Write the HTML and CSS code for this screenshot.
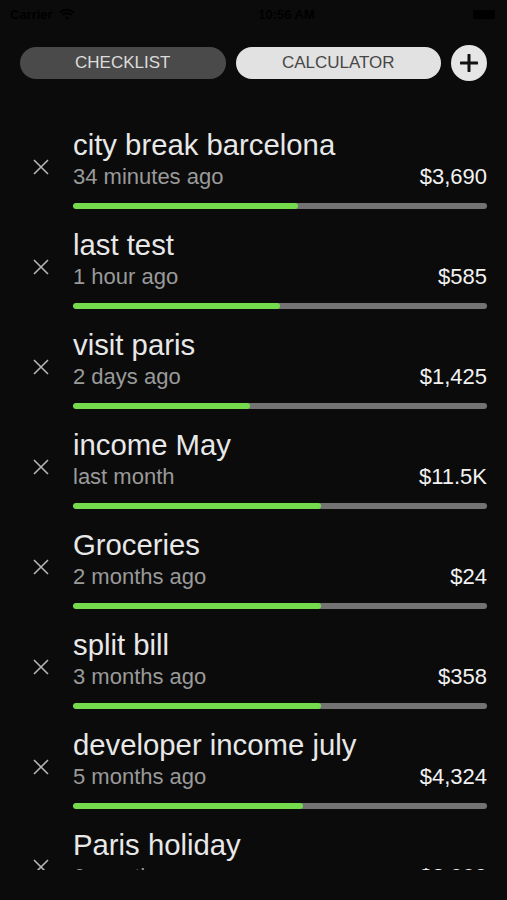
FILE: index.html
```html
<!DOCTYPE html>
<html>
  <head>
    <title>Budget Lists</title>
    <link rel="stylesheet" href="styles.css">
  </head>
  <body>
    <div class="status-bar">
      <span class="carrier">Carrier
        <svg class="wifi" width="16" height="12" viewBox="0 0 16 12">
          <path d="M1 4.5 A10 10 0 0 1 15 4.5" fill="none" stroke="#000" stroke-width="2"/>
          <path d="M3.5 7 A6.5 6.5 0 0 1 12.5 7" fill="none" stroke="#000" stroke-width="2"/>
          <circle cx="8" cy="10" r="1.6" fill="#000"/>
        </svg>
      </span>
      <span class="clock">10:56 AM</span>
      <span class="battery"></span>
    </div>

    <div class="tabs">
      <button class="tab tab-dark">CHECKLIST</button>
      <button class="tab tab-light">CALCULATOR</button>
      <button class="add-button">
        <svg width="18" height="18" viewBox="0 0 18 18">
          <path d="M9 1 V17 M1 9 H17" stroke="#111" stroke-width="3" stroke-linecap="round"/>
        </svg>
      </button>
    </div>

    <div class="js-list list"></div>

    <script>
      const lists = [
        { name: 'city break barcelona', time: '34 minutes ago', total: '$3,690', done: 54.3 },
        { name: 'last test', time: '1 hour ago', total: '$585', done: 50 },
        { name: 'visit paris', time: '2 days ago', total: '$1,425', done: 42.8 },
        { name: 'income May', time: 'last month', total: '$11.5K', done: 59.9 },
        { name: 'Groceries', time: '2 months ago', total: '$24', done: 59.9 },
        { name: 'split bill', time: '3 months ago', total: '$358', done: 59.9 },
        { name: 'developer income july', time: '5 months ago', total: '$4,324', done: 55.6 },
        { name: 'Paris holiday', time: '6 months ago', total: '$2,000', done: 50 }
      ];

      let html = '';

      lists.forEach((item) => {
        html += `
          <div class="row">
            <div class="remove">
              <svg width="18" height="18" viewBox="0 0 18 18">
                <path d="M2 2 L16 16 M16 2 L2 16" stroke="#b5b5b5" stroke-width="1.6"/>
              </svg>
            </div>
            <div class="row-body">
              <p class="row-title">${item.name}</p>
              <div class="row-info">
                <span class="row-time">${item.time}</span>
                <span class="row-total">${item.total}</span>
              </div>
              <div class="progress">
                <div class="progress-fill" style="width: ${item.done}%"></div>
              </div>
            </div>
          </div>`;
      });

      document.querySelector('.js-list').innerHTML = html;
    </script>
  </body>
</html>
```

FILE: styles.css
```css
body {
    margin: 0;
    background-color: #0b0b0b;
    font-family: "Liberation Sans", Arial, Helvetica, sans-serif;
    color: #e6e6e6;
}
.status-bar {
    height: 28px;
    display: flex;
    align-items: center;
    justify-content: space-between;
    padding: 0 12px 0 10px;
    font-size: 13px;
    font-weight: bold;
    color: #000;
}
.carrier {
    display: flex;
    align-items: center;
    gap: 6px;
    width: 120px;
}
.clock {
    flex: 1;
    text-align: center;
    padding-right: 30px;
}
.battery {
    width: 22px;
    height: 9px;
    background-color: #000;
    border-radius: 2px;
}
.tabs {
    display: flex;
    align-items: center;
    gap: 10px;
    padding: 17px 20px 0 20px;
}
.tab {
    flex: 1;
    height: 32px;
    border: none;
    border-radius: 16px;
    font-family: "Liberation Sans", Arial, Helvetica, sans-serif;
    font-size: 17px;
    padding: 0;
    cursor: pointer;
}
.tab-dark {
    background-color: #4a4a4a;
    color: #dcdcdc;
}
.tab-light {
    background-color: #e2e2e2;
    color: #474747;
}
.add-button {
    width: 36px;
    height: 36px;
    flex-shrink: 0;
    border: none;
    border-radius: 50%;
    background-color: #e6e6e6;
    padding: 0;
    display: flex;
    align-items: center;
    justify-content: center;
    cursor: pointer;
}
.list {
    margin-top: 47px;
    height: 742px;
    overflow: hidden;
}
.row {
    display: flex;
    align-items: center;
    padding: 0 20px;
    margin-bottom: 19px;
}
.remove {
    width: 42px;
    flex-shrink: 0;
    display: flex;
    justify-content: center;
    margin-right: 11px;
    margin-top: -4px;
}
.row-body {
    flex: 1;
}
.row-title {
    margin: 0;
    font-size: 29.3px;
    line-height: 34px;
    color: #e8e8e8;
}
.row-info {
    display: flex;
    justify-content: space-between;
    align-items: baseline;
    margin-top: 2px;
    font-size: 22px;
    line-height: 26px;
}
.row-time {
    color: #9a9a9a;
}
.row-total {
    color: #f2f2f2;
}
.progress {
    margin-top: 13px;
    height: 6px;
    border-radius: 3px;
    background-color: #737373;
    overflow: hidden;
}
.progress-fill {
    height: 100%;
    border-radius: 3px;
    background-color: #74dc4c;
}
```
